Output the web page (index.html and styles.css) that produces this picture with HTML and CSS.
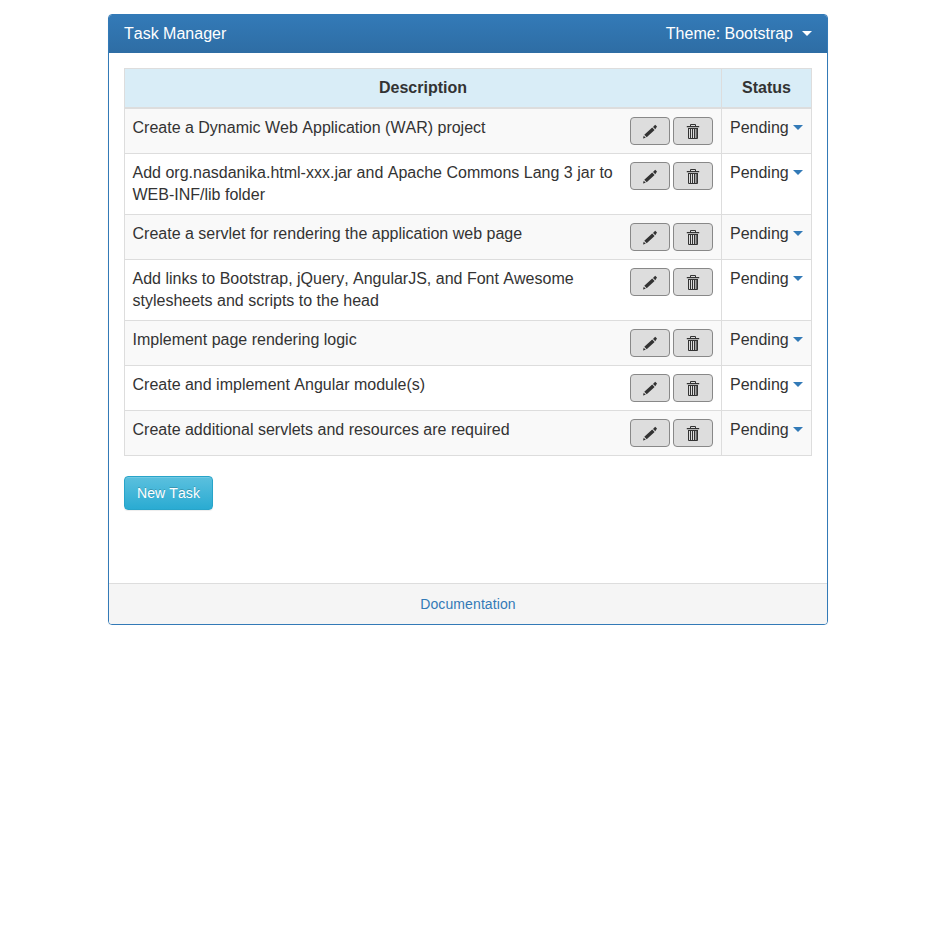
FILE: index.html
```html
<!DOCTYPE html>
<html lang="en">
<head>
<meta charset="utf-8">
<title>Task Manager</title>
<link rel="stylesheet" href="styles.css">
</head>
<body>
<svg class="sprite" aria-hidden="true">
  <symbol id="pencil" viewBox="0 0 14 15"><path d="M0 14.5 L.7 11.7 L2.8 13.7 Z M1.3 10.8 L9.2 3.6 L11.6 6 L3.7 13.3 Z M10 2.9 L12.2 .8 L14 2.6 L12.3 5.2 Z"/></symbol>
  <symbol id="trash" viewBox="0 0 14 15"><path class="line" d="M4.5 2 V.5 H9.5 V2 M2.5 4 V14.5 H11.5 V4 M4.5 5 V14 M6.5 5 V14 M8.5 5 V14 M10.2 5 V14"/><path d="M.8 2 H13.2 V3.2 H.8 Z M2 4 H12 V5 H2 Z"/></symbol>
</svg>
<main class="panel">
  <header class="panel-heading"><span>Task Manager</span><span class="theme">Theme: Bootstrap<i class="caret"></i></span></header>
  <div class="panel-body">
    <table class="tasks">
      <thead><tr><th>Description</th><th class="status">Status</th></tr></thead>
      <tbody>
        <tr><td><div class="task"><span>Create a Dynamic Web Application (WAR) project</span><div class="actions"><button><svg><use href="#pencil"/></svg></button><button><svg><use href="#trash"/></svg></button></div></div></td><td>Pending<i class="caret"></i></td></tr>
        <tr><td><div class="task"><span>Add org.nasdanika.html-xxx.jar and Apache Commons Lang 3 jar to<br>WEB-INF/lib folder</span><div class="actions"><button><svg><use href="#pencil"/></svg></button><button><svg><use href="#trash"/></svg></button></div></div></td><td>Pending<i class="caret"></i></td></tr>
        <tr><td><div class="task"><span>Create a servlet for rendering the application web page</span><div class="actions"><button><svg><use href="#pencil"/></svg></button><button><svg><use href="#trash"/></svg></button></div></div></td><td>Pending<i class="caret"></i></td></tr>
        <tr><td><div class="task"><span>Add links to Bootstrap, jQuery, AngularJS, and Font Awesome<br>stylesheets and scripts to the head</span><div class="actions"><button><svg><use href="#pencil"/></svg></button><button><svg><use href="#trash"/></svg></button></div></div></td><td>Pending<i class="caret"></i></td></tr>
        <tr><td><div class="task"><span>Implement page rendering logic</span><div class="actions"><button><svg><use href="#pencil"/></svg></button><button><svg><use href="#trash"/></svg></button></div></div></td><td>Pending<i class="caret"></i></td></tr>
        <tr><td><div class="task"><span>Create and implement Angular module(s)</span><div class="actions"><button><svg><use href="#pencil"/></svg></button><button><svg><use href="#trash"/></svg></button></div></div></td><td>Pending<i class="caret"></i></td></tr>
        <tr><td><div class="task"><span>Create additional servlets and resources are required</span><div class="actions"><button><svg><use href="#pencil"/></svg></button><button><svg><use href="#trash"/></svg></button></div></div></td><td>Pending<i class="caret"></i></td></tr>
      </tbody>
    </table>
    <button class="new-task">New Task</button>
  </div>
  <footer class="panel-footer"><a>Documentation</a></footer>
</main>
</body>
</html>
```

FILE: styles.css
```css
* { box-sizing: border-box; }
body { margin: 0; background: #fff; color: #333; font: 16px/22px "Liberation Sans", Arial, sans-serif; font-kerning: none; }
.sprite { display: none; }
.panel { display: flex; flex-direction: column; width: 720px; height: 611px; margin: 14px 0 0 108px; border: 1px solid #337ab7; border-radius: 4px; box-shadow: 0 1px 2px rgba(0,0,0,.05); overflow: hidden; }
.panel-heading { display: flex; justify-content: space-between; height: 38px; padding: 8px 15px; color: #fff; background: linear-gradient(#337ab7, #2e6da4); }
.caret { display: inline-block; margin-left: 4px; vertical-align: 3px; border: 5px solid transparent; border-top-color: #337ab7; border-bottom: 0; }
.theme .caret { margin-left: 9px; border-top-color: #fff; }
.panel-body { flex: 1; padding: 15px; }
.tasks { width: 688px; table-layout: fixed; border-collapse: separate; border-spacing: 0; border: solid #ddd; border-width: 1px 0 0 1px; }
th, td { padding: 8px; vertical-align: top; border: solid #ddd; border-width: 0 1px 1px 0; }
td:first-child { padding-left: 7.5px; }
th { height: 40px; border-bottom-width: 2px; background: #d9edf7; }
.status { width: 90px; }
td { white-space: nowrap; }
tbody tr:nth-child(odd) { background: #f9f9f9; }
.task { display: flex; justify-content: space-between; }
.actions { display: flex; gap: 3px; height: 28px; }
.actions button { display: flex; justify-content: center; width: 40px; height: 28px; padding: 6px 0 0; border: 1px solid #888; border-radius: 4px; background: #ddd; color: #333; }
.actions svg { width: 14px; height: 15px; fill: currentColor; }
.line { fill: none; stroke: currentColor; }
.new-task { display: block; width: 89px; height: 34px; margin-top: 20px; padding: 0; font: 14px/20px "Liberation Sans", Arial, sans-serif; font-kerning: none; letter-spacing: .1px; color: #fff; border: 1px solid #28a4c9; border-radius: 4px; background: linear-gradient(#5bc0de, #2aabd2); text-shadow: 0 -1px 0 rgba(0,0,0,.2); box-shadow: inset 0 1px 0 rgba(255,255,255,.15), 0 1px 1px rgba(0,0,0,.075); }
.panel-footer { height: 41px; padding: 10px 15px; border-top: 1px solid #ddd; background: #f5f5f5; text-align: center; font-size: 14px; line-height: 20px; letter-spacing: .1px; }
.panel-footer a { color: #337ab7; }
```
